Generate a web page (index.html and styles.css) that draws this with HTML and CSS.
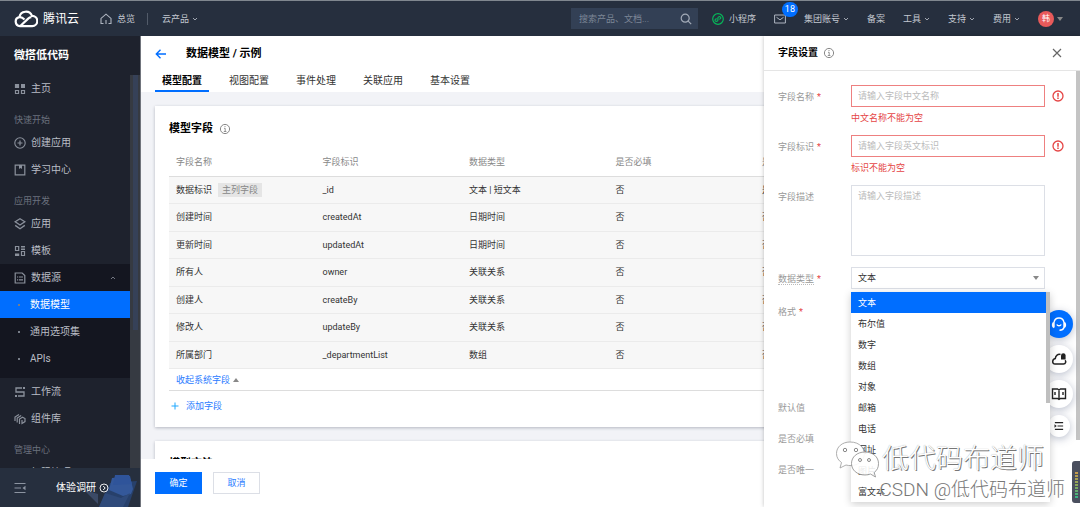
FILE: index.html
```html
<!DOCTYPE html>
<html lang="zh-CN">
<head>
<meta charset="utf-8">
<title>数据模型 / 示例</title>
<link rel="stylesheet" href="styles.css">
</head>
<body>
<svg class="defs" aria-hidden="true">
  <symbol id="chev" viewBox="0 0 6 6"><path d="M1 2l2 2 2-2" fill="none" stroke="currentColor" stroke-width=".8"/></symbol>
  <symbol id="info" viewBox="0 0 12 12"><circle cx="6" cy="6" r="4.6" fill="none" stroke="currentColor"/><path d="M5 5.3h1.2v3.2M4.8 8.5h2.6M5.5 3.5h1" fill="none" stroke="currentColor" stroke-width=".9"/></symbol>
  <symbol id="warn" viewBox="0 0 12 12"><circle cx="6" cy="6" r="5" fill="none" stroke="currentColor" stroke-width="1.3"/><path d="M6 3v3.7M6 7.6v1.4" stroke="currentColor" stroke-width="1.5"/></symbol>
</svg>

<header class="topbar">
  <a class="brand" href="#">
    <svg class="brand-icon" viewBox="0 0 24 18"><path d="M6 16.2a4.6 4.6 0 0 1-.6-9.1A6.6 6.6 0 0 1 18 5.8a5.2 5.2 0 0 1 .2 10.4H6l8.2-7.6a5 5 0 0 1 3.2-1.4M5.5 7.1c2.2-.2 3.500.8 5 2.400" fill="none" stroke="#fff" stroke-width="2.200" stroke-linejoin="round"/></svg>
    <span>腾讯云</span>
  </a>
  <a class="top-link home" href="#">
    <svg class="i12" viewBox="0 0 12 12"><path d="M3.500 10.500H1V5.400L6 1.200l5 4.200v5.100H8.500M6 7v4" fill="none" stroke="#aeb5c0" stroke-width="1.100"/></svg>
    总览
  </a>
  <span class="top-sep"></span>
  <button class="top-link">云产品<svg class="i6"><use href="#chev"/></svg></button>
  <nav class="top-right">
    <label class="search">
      <input type="text" placeholder="搜索产品、文档..." aria-label="搜索产品、文档">
      <svg class="i12" viewBox="0 0 12 12"><circle cx="5.200" cy="5.200" r="4" fill="none" stroke="#a3abb8" stroke-width="1.200"/><path d="M8.200 8.200l3 3" stroke="#a3abb8" stroke-width="1.200"/></svg>
    </label>
    <a class="top-link mini" href="#"><svg class="i12" viewBox="0 0 12 12"><circle cx="6" cy="6" r="5.300" fill="none" stroke="#07b65a" stroke-width="1.200"/><path d="M4.800 6c-1.400-.3-2.200 1-1.500 1.900.9 1 2.600.3 2.600-1V5.100c0-1.300 1.800-2 2.600-1C9.300 5 8.500 6.200 7.200 6" fill="none" stroke="#07b65a" stroke-width="1.200"/></svg>小程序</a>
    <a class="mail" href="#" aria-label="消息"><svg class="i12" viewBox="0 0 12 12"><path d="M.6 2h10.800v8H.6zM2.500 4.300L6 6.800l3.500-2.500" fill="none" stroke="#aeb5c0"/></svg><span class="badge">18</span></a>
    <button class="top-link account">集团账号<svg class="i6"><use href="#chev"/></svg></button>
    <a class="top-link" href="#">备案</a>
    <button class="top-link">工具<svg class="i6"><use href="#chev"/></svg></button>
    <button class="top-link">支持<svg class="i6"><use href="#chev"/></svg></button>
    <button class="top-link">费用<svg class="i6"><use href="#chev"/></svg></button>
    <button class="user"><span class="avatar">韩</span><span class="caret"></span></button>
  </nav>
</header>

<div class="shell">
  <aside class="side">
    <h2 class="side-title">微搭低代码</h2>
    <nav class="side-nav">
      <div class="side-list">
        <a class="item" href="#"><svg class="i12" viewBox="0 0 12 12"><path d="M1.500 1.500h3v3h-3zM7.500 7.500h3v3h-3zM1.500 7.500h3v3h-3z" fill="none" stroke="currentColor" stroke-width="1.200"/><path d="M1 1h4v4H1zM7 1h4v4H7z" fill="currentColor"/></svg>主页</a>
        <p class="group">快速开始</p>
        <a class="item" href="#"><svg class="i12" viewBox="0 0 12 12"><circle cx="6" cy="6" r="5.200" fill="none" stroke="currentColor" stroke-width="1.100"/><path d="M6 3.500v5M3.500 6h5" stroke="currentColor" stroke-width="1.200"/></svg>创建应用</a>
        <a class="item" href="#"><svg class="i12" viewBox="0 0 12 12"><path d="M1.200 1.200h9.600v9.600H1.200z" fill="none" stroke="currentColor" stroke-width="1.200"/><path d="M5 1h3v4L6.500 4 5 5z" fill="currentColor"/></svg>学习中心</a>
        <p class="group">应用开发</p>
        <a class="item" href="#"><svg class="i12" viewBox="0 0 12 12"><path d="M6 .8l4.800 3L6 7 1.200 3.800zM1.200 7.400L6 10.800l4.800-3.400" fill="none" stroke="currentColor" stroke-width="1.300"/></svg>应用</a>
        <a class="item" href="#"><svg class="i12" viewBox="0 0 12 12"><path d="M1.500 1.500h3.200v4H1.500zM7.500 6.500h3v4h-3z" fill="none" stroke="currentColor" stroke-width="1.200"/><path d="M1 8.500h4.200V11H1zM7 1h4v1.500H7zM7 3.500h4V5H7z" fill="currentColor"/></svg>模板</a>
        <div class="open">
          <a class="item" href="#"><svg class="i12" viewBox="0 0 12 12"><path d="M1.200 1h7l2.600 2.500V11H1.200z" fill="none" stroke="currentColor" stroke-width="1.200"/><path d="M3 5h1.200M5 5h4M3 7.800h1.200M5 7.800h4" stroke="currentColor" stroke-width="1.200"/></svg>数据源<svg class="i6 up"><use href="#chev"/></svg></a>
          <a class="item sub active" href="#"><i></i>数据模型</a>
          <a class="item sub" href="#"><i></i>通用选项集</a>
          <a class="item sub" href="#"><i></i>APIs</a>
        </div>
        <a class="item" href="#"><svg class="i12" viewBox="0 0 12 12"><path d="M8 2H2v4h8v4H4" fill="none" stroke="currentColor" stroke-width="1.300"/><path d="M9 1h2v2H9zM1 9h2v2H1z" fill="currentColor"/></svg>工作流</a>
        <a class="item" href="#"><svg class="i12" viewBox="0 0 12 12"><path d="M1 8V4l4-2.500M3.200 9.500V5l4-2.500M5.500 11V6l3-1.800 2.500 1.400v3L8 10.500V7" fill="none" stroke="currentColor" stroke-width="1.200"/></svg>组件库</a>
        <p class="group">管理中心</p>
        <a class="item last" href="#">权限管理</a>
      </div>
      <div class="side-track"></div>
    </nav>
    <footer class="side-foot">
      <svg class="i12" viewBox="0 0 12 12"><path d="M.5 1.500h11M.5 6H7M.5 10.500h11" stroke="#8c94a1" stroke-width="1.100"/><path d="M11.500 3.800v4.400L8.500 6z" fill="#8c94a1"/></svg>
      <svg class="clip-art" viewBox="0 0 58 33" aria-hidden="true"><path d="M4 16l14 4 0 10z" fill="#3b4a66"/><path d="M19 33L30 9l27-2-9 26z" fill="#27406b"/><path d="M32 4l18-2 3 13-2 5-8 2-14-6z" fill="#34589a"/><path d="M35 1l14 0 3 9-19 1z" fill="#2f549a"/><path d="M25 19l16 5 9-5-7 14H19z" fill="#2f4a7a"/></svg>
      <a href="#" class="survey">体验调研<svg class="i10" viewBox="0 0 10 10"><circle cx="5" cy="5" r="4" fill="none" stroke="currentColor" stroke-width=".9"/><path d="M4.200 3l2 2-2 2" fill="none" stroke="currentColor"/></svg></a>
    </footer>
  </aside>

  <main class="main">
    <header class="page-head">
      <div class="crumb">
        <button class="back" aria-label="返回"><svg class="i12" viewBox="0 0 12 12"><path d="M11 6H1.500M5.500 1.800L1.300 6l4.200 4.200" fill="none" stroke="#006eff" stroke-width="1.400"/></svg></button>
        <h1>数据模型 / 示例</h1>
      </div>
      <nav class="tabs">
        <a class="on" href="#">模型配置</a><a href="#">视图配置</a><a href="#">事件处理</a><a href="#">关联应用</a><a href="#">基本设置</a>
      </nav>
    </header>
    <div class="content">
      <section class="card">
        <h3>模型字段<svg class="i12"><use href="#info"/></svg></h3>
        <table>
          <thead><tr><th>字段名称</th><th>字段标识</th><th>数据类型</th><th>是否必填</th><th>是否唯一</th><th></th></tr></thead>
          <tbody>
            <tr><td>数据标识<span class="tag">主列字段</span></td><td>_id</td><td>文本 | 短文本</td><td>否</td><td>是</td><td></td></tr>
            <tr><td>创建时间</td><td>createdAt</td><td>日期时间</td><td>否</td><td>否</td><td></td></tr>
            <tr><td>更新时间</td><td>updatedAt</td><td>日期时间</td><td>否</td><td>否</td><td></td></tr>
            <tr><td>所有人</td><td>owner</td><td>关联关系</td><td>否</td><td>否</td><td></td></tr>
            <tr><td>创建人</td><td>createBy</td><td>关联关系</td><td>否</td><td>否</td><td></td></tr>
            <tr><td>修改人</td><td>updateBy</td><td>关联关系</td><td>否</td><td>否</td><td></td></tr>
            <tr><td>所属部门</td><td>_departmentList</td><td>数组</td><td>否</td><td>否</td><td></td></tr>
          </tbody>
        </table>
        <button class="collapse">收起系统字段<span class="tri-up"></span></button>
        <button class="add"><svg class="i8" viewBox="0 0 8 8"><path d="M4 .5v7M.5 4h7" stroke="#1fa8ff"/></svg>添加字段</button>
      </section>
      <section class="card"><h3>模型方法</h3></section>
    </div>
    <footer class="actions">
      <button class="btn primary">确定</button>
      <button class="btn">取消</button>
    </footer>
  </main>
</div>

<aside class="panel">
  <header class="panel-head">
    <h2>字段设置</h2><svg class="i12"><use href="#info"/></svg>
    <button class="close" aria-label="关闭"><svg class="i10" viewBox="0 0 10 10"><path d="M1 1l8 8M9 1L1 9" stroke="#666" stroke-width="1.200"/></svg></button>
  </header>
  <form class="form">
    <div class="row err">
      <label for="f-name">字段名称<em>*</em></label>
      <div class="ctl"><input id="f-name" type="text" placeholder="请输入字段中文名称"><p>中文名称不能为空</p></div>
      <svg class="i12"><use href="#warn"/></svg>
    </div>
    <div class="row err">
      <label for="f-id">字段标识<em>*</em></label>
      <div class="ctl"><input id="f-id" type="text" placeholder="请输入字段英文标识"><p>标识不能为空</p></div>
      <svg class="i12"><use href="#warn"/></svg>
    </div>
    <div class="row">
      <label for="f-desc">字段描述</label>
      <div class="ctl"><textarea id="f-desc" placeholder="请输入字段描述"></textarea></div>
    </div>
    <div class="row type">
      <label for="f-type"><span class="dotted">数据类型</span><em>*</em></label>
      <div class="ctl">
        <select id="f-type"><option>文本</option></select>
        <span class="caret"></span>
        <div class="menu">
          <ul role="listbox" aria-label="数据类型">
            <li role="option" aria-selected="true">文本</li><li role="option">布尔值</li><li role="option">数字</li><li role="option">数组</li><li role="option">对象</li><li role="option">邮箱</li><li role="option">电话</li><li role="option">网址</li><li role="option">图片</li><li role="option">富文本</li>
          </ul>
          <span class="menu-thumb"></span>
        </div>
      </div>
    </div>
    <div class="row format"><span class="lbl">格式<em>*</em></span></div>
    <div class="row default"><span class="lbl">默认值</span></div>
    <div class="row"><span class="lbl">是否必填</span></div>
    <div class="row"><span class="lbl">是否唯一</span></div>
  </form>
  <span class="panel-thumb"></span>
</aside>

<div class="dock">
  <button class="blue" aria-label="客服"><svg viewBox="0 0 16 16"><path d="M3 11.500C1 11 1 7 3 6.500 3.500 3.500 5.500 2 8 2s4.500 1.500 5 4.500c2 .5 2 4.500 0 5-.6 1.800-2 2.700-4.500 2.700M3 6v5.500M13 6v5.500M5.800 8.500c1 1.700 3.400 1.700 4.400 0" fill="none" stroke="#fff" stroke-width="1.400"/></svg></button>
  <button aria-label="云服务"><svg viewBox="0 0 16 16"><path d="M9.500 3.500C7 2.800 4.500 4.500 4.300 7.500 1 8 .8 13 4 13h8.500c2.300 0 2.800-2.500 1.600-3.800" fill="none" stroke="#222" stroke-width="1.500"/><path d="M10 8.500V4.500a2.300 2.300 0 0 1 4.600 0v4z" fill="#222"/></svg></button>
  <button aria-label="文档"><svg viewBox="0 0 16 16"><path d="M1.500 3H6.500L8 4l1.500-1h5v9.500h-5L8 13.500 6.500 12.500h-5zM8 4v9M4 6v3M12 6v3" fill="none" stroke="#222" stroke-width="1.400"/></svg></button>
  <button class="small" aria-label="收起"><svg viewBox="0 0 16 16"><path d="M2.500 3.500h11M6 8h7.500M2.500 12.500h11" stroke="#222" stroke-width="1.500"/><path d="M2 5.800L5 8l-3 2.200z" fill="#222"/></svg></button>
</div>
<div class="meter"><span></span></div>

<div class="mark">
  <div class="mark-a">
    <svg viewBox="0 0 44 38"><path d="M15 2C7 2 1.500 7 1.500 13.500c0 4 2 7 5 9L5 28l6-3c3 .8 7 .8 10-.3C30 22 31 12 27 7c-3-3.500-7-5-12-5z" fill="#fff" stroke="#999" stroke-width=".8"/><path d="M30 12c-8 0-13.500 5-13.500 11.500S22 35 30 35c2 0 4-.4 5.500-1l5 3-1.300-4.500c3-2.300 4.300-5 4.300-9C43.500 17 38 12 30 12z" fill="#fff" fill-opacity=".9" stroke="#888" stroke-width=".8"/><circle cx="10" cy="10" r="1.700" fill="none" stroke="#888"/><circle cx="21" cy="10" r="1.700" fill="none" stroke="#888"/><circle cx="25" cy="20" r="1.500" fill="none" stroke="#888"/><circle cx="34" cy="20" r="1.500" fill="none" stroke="#888"/></svg>
    <span>低代码布道师</span>
  </div>
  <div class="mark-b">CSDN @低代码布道师</div>
</div>
</body>
</html>
```
FILE: styles.css
```css
* { box-sizing: border-box; }
body {
  margin: 0;
  height: 100vh;
  display: flex;
  flex-direction: column;
  position: relative;
  overflow: hidden;
  background: #f2f3f7;
  color: #333;
  font: 9px/14px Roboto, "Noto Sans CJK SC", sans-serif;
}
h1, h2, h3, p, ul { margin: 0; padding: 0; }
ul { list-style: none; }
a { color: inherit; text-decoration: none; }
button { font: inherit; color: inherit; background: none; border: 0; padding: 0; }
input, textarea, select { font: inherit; color: inherit; border-radius: 0; outline: 0; }
svg { flex: none; }
em { font-style: normal; color: #e54545; margin-left: 3px; }
.defs { position: absolute; width: 0; height: 0; }
.i6 { width: 6px; height: 6px; }
.i8 { width: 8px; height: 8px; }
.i10 { width: 10px; height: 10px; }
.i12 { width: 12px; height: 12px; }
.caret { border: 3px solid transparent; border-top: 4px solid #888; border-bottom: 0; }

/* top bar */
.topbar {
  flex: none;
  height: 36px;
  display: flex;
  align-items: center;
  padding: 0 17px 0 14px;
  background: #262f3e;
  border-top: 1px solid #80878f;
  color: #c3c8d0;
}
.brand { display: flex; align-items: center; gap: 5px; color: #fff; font-size: 12px; }
.brand-icon { width: 24px; height: 18px; }
.top-link { display: flex; align-items: center; gap: 3px; white-space: nowrap; }
.home { gap: 5px; margin-left: 21px; }
.top-sep { width: 1px; height: 12px; margin: 0 14px 0 12px; background: #525b69; }
.top-right { margin-left: auto; display: flex; align-items: center; gap: 18px; }
.search { display: flex; align-items: center; width: 127px; height: 21px; padding: 0 6px; background: #334055; }
.search input { flex: 1; min-width: 0; padding: 0 2px; border: 0; background: none; }
.search input::placeholder { color: #7c8696; }
.top-right .mini { gap: 5px; margin-left: -4px; }
.mail { display: flex; position: relative; }
.badge {
  position: absolute;
  left: 8px;
  top: -11px;
  width: 16px;
  height: 15px;
  border-radius: 8px;
  background: #006eff;
  color: #fff;
  line-height: 15px;
  text-align: center;
}
.user { display: flex; align-items: center; gap: 3px; }
.avatar { width: 16px; height: 16px; border-radius: 8px; background: #e85a5a; color: #fff; font-size: 8px; line-height: 16px; }

/* side navigation */
.shell { flex: 1; min-height: 0; display: flex; }
.side {
  flex: none;
  width: 141px;
  display: flex;
  flex-direction: column;
  background: #1e222d;
  border-right: 1px solid #70747c;
  color: #b9bdc5;
  font-size: 10px;
}
.side-title { height: 39px; padding-left: 14px; color: #fff; font-size: 11px; line-height: 40px; }
.side-nav { flex: 1; min-height: 0; display: flex; overflow: hidden; }
.side-list { flex: 1; }
.item { display: flex; align-items: center; gap: 5px; height: 27px; padding-left: 14px; }
.item svg { color: #8b919c; }
.item .up { margin-left: auto; margin-right: 14px; transform: rotate(180deg); }
.last { padding-left: 31px; }
.group { height: 17px; margin-top: 10px; padding-left: 14px; color: #6b717d; font-size: 9px; line-height: 17px; }
.open { background: #141620; padding-bottom: 6px; }
.sub { gap: 10px; padding-left: 18px; }
.sub i { width: 2px; height: 2px; background: #777d88; }
.active { background: #006eff; color: #fff; }
.side-track { width: 10px; background: #363a42; }
.side-track::before { content: ""; display: block; width: 5px; height: 65%; margin-left: 3px; background: #364158; }
.side-foot { height: 39px; display: flex; align-items: center; padding-left: 14px; background: #262f3e; position: relative; color: #fff; }
.survey { position: relative; display: flex; align-items: center; gap: 3px; margin-left: 30px; }
.clip-art { position: absolute; right: 2px; bottom: 0; width: 58px; height: 33px; }

/* main area */
.main { flex: 1; min-width: 0; display: flex; flex-direction: column; }
.page-head { flex: none; background: #fff; padding: 0 14px; }
.crumb { display: flex; align-items: center; gap: 19px; height: 35px; }
.back { display: flex; }
h1 { font-size: 11px; color: #000; }
.tabs { display: flex; gap: 13px; font-size: 10px; color: #333; }
.tabs a { height: 21px; padding: 0 7px; line-height: 20px; }
.tabs .on { font-weight: bold; color: #000; border-bottom: 2px solid #006eff; }
.content { flex: 1; min-height: 0; overflow: hidden; padding: 14px 18px 0 14px; }
.card { background: #fff; padding: 14px 14px 10px; margin-bottom: 14px; box-shadow: 0 1px 3px rgba(54, 58, 80, .32); }
.card h3 { display: flex; align-items: center; gap: 6px; height: 18px; font-size: 11px; color: #000; }
.card h3 svg { color: #888; }
table { width: 100%; height: 231px; table-layout: fixed; border-collapse: collapse; }
th, td { padding: 0 7px; text-align: left; }
th { height: 38px; padding-top: 10px; font-weight: normal; color: #888; border-bottom: 1px solid #ddd; }
td { background: #f7f7f7; border-bottom: 1px solid #ebebeb; }
.tag { display: inline-block; margin-left: 6px; padding: 0 4px; background: #e5e5e5; color: #888; }
.collapse { display: flex; align-items: center; gap: 3px; width: 100%; height: 22px; padding-left: 7px; color: #2b7cff; border-bottom: 1px solid #ddd; }
.tri-up { border: 3px solid transparent; border-bottom: 4px solid #888; border-top: 0; }
.add { display: flex; align-items: center; gap: 7px; height: 22px; margin-top: 4px; padding-left: 2px; color: #2b7cff; }
.actions { flex: none; display: flex; gap: 11px; padding: 13px 14px; background: #fff; }
.btn { width: 47px; height: 22px; border: 1px solid #dcdfe6; color: #2b7cff; }
.btn.primary { background: #006eff; border-color: #006eff; color: #fff; }

/* field settings panel */
.panel {
  position: absolute;
  top: 36px;
  right: 0;
  bottom: 0;
  width: 316px;
  background: #fff;
  box-shadow: 0 0 4px rgba(0, 0, 0, .25);
}
.panel-head { display: flex; align-items: center; gap: 5px; height: 35px; padding: 0 18px 0 14px; border-bottom: 1px solid #e5e5e5; color: #888; }
.panel-head h2 { font-size: 10px; color: #000; }
.close { display: flex; margin-left: auto; }
.form { display: flex; flex-direction: column; gap: 8px; padding: 14px 14px 0; }
.row { display: flex; align-items: flex-start; color: #999; }
.row label, .lbl { flex: none; width: 73px; height: 22px; line-height: 24px; }
.ctl { position: relative; width: 194px; color: #333; }
.ctl input, .ctl textarea, .ctl select { display: block; width: 100%; height: 22px; padding: 0 6px; border: 1px solid #dcdfe6; background: #fff; }
.ctl textarea { height: 71px; padding-top: 3px; resize: none; }
.ctl ::placeholder { color: #bbb; }
.ctl select { appearance: none; }
.ctl > .caret { position: absolute; right: 6px; top: 9px; }
.err input { border-color: #ee8080; }
.err p { height: 20px; padding-top: 4px; color: #e54545; }
.err > svg { margin: 5px 0 0 7px; color: #e54545; }
.dotted { border-bottom: 1px dotted #bbb; }
.type { margin-top: 3px; }
.format { margin-top: 3px; height: 88px; }
.row:nth-last-child(-n+2) { margin-top: 1px; }
.menu {
  position: absolute;
  left: 0;
  top: 25px;
  width: 199px;
  display: flex;
  align-items: flex-start;
  background: #fff;
  box-shadow: 0 2px 8px rgba(0, 0, 0, .2);
}
.menu ul { flex: 1; }
.menu li { height: 21px; padding-left: 7px; line-height: 22px; }
.menu li[aria-selected] { background: #006eff; color: #fff; }
.menu-thumb { width: 4px; height: 111px; background: #bfbfbf; }
.panel-thumb { position: absolute; right: 0; top: 35px; width: 4px; height: 369px; background: #c4c4c4; }

/* floating tools sit beside the open menu, which stays above them */
.menu { z-index: 3; }
.dock { position: absolute; right: 7px; top: 310px; display: flex; flex-direction: column; align-items: flex-end; gap: 7px; z-index: 1; }
.dock button { display: grid; place-items: center; width: 28px; height: 28px; border-radius: 50%; background: #fff; box-shadow: 0 2px 8px rgba(55, 70, 110, .35); }
.dock .blue { background: #006eff; }
.dock .small { width: 22px; height: 22px; margin: 0 3px; }
.dock svg { width: 16px; height: 16px; }
.dock .small svg { width: 12px; height: 12px; }
.meter { position: absolute; right: 0; bottom: 4px; width: 8px; height: 42px; padding: 11px 2px 4px 3px; border-radius: 3px 0 0 3px; background: #4a4f5e; }
.meter span { display: block; height: 100%; background: repeating-linear-gradient(#0000 0 2px, #4a4f5e 2px 3px), linear-gradient(#c89a4a, #8aa85a, #2fb58c); }

/* watermark */
.mark { position: absolute; right: 15px; bottom: 5px; z-index: 4; display: flex; flex-direction: column; align-items: flex-end; pointer-events: none; }
.mark-a { display: flex; align-items: center; gap: 3px; margin-right: 21px; color: #fff; font-size: 27px; font-weight: 300; line-height: 36px; text-shadow: 1px 1px 0 #777, 0 0 1px #999; }
.mark-a svg { width: 44px; height: 38px; }
.mark-b { color: #777; font-size: 19px; font-weight: 300; line-height: 24px; text-shadow: -1px -1px 0 #fff; }
```
